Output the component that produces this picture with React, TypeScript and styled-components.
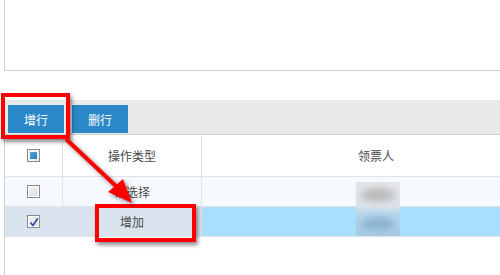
import React from 'react'
import styled, { createGlobalStyle } from 'styled-components'

const GlobalStyle = createGlobalStyle`
	html, body {
		margin: 0;
		padding: 0;
		background: #fff;
		overflow: hidden;
	}
	body {
		font-family: "Noto Sans CJK SC", "Liberation Sans", sans-serif;
		font-size: 12px;
		color: #444;
	}
`

const Page = styled.div`
	position: relative;
	width: 500px;
	height: 275px;
	overflow: hidden;
	padding-left: 4px;
	box-sizing: border-box;
`

const Inner = styled.div`
	width: 560px;
	display: flex;
	flex-direction: column;
`

const TopBox = styled.div`
	height: 70px;
	border-left: 1px solid #cfcfcf;
	border-bottom: 1px solid #cfcfcf;
	margin-bottom: 29px;
`

const Toolbar = styled.div`
	display: flex;
	gap: 8px;
	height: 35px;
	padding: 5px 0 0 4px;
	box-sizing: border-box;
	background: #e9e9e9;
	border-bottom: 1px solid #d2d2d2;
`

const ToolButton = styled.div`
	width: 56px;
	height: 28px;
	display: flex;
	align-items: center;
	justify-content: center;
	background: #2a88c9;
	color: #fff;
	font-size: 12px;
`

const Grid = styled.div`
	display: grid;
	grid-template-columns: 58px 139px 348px;
	border-left: 1px solid #cfcfcf;
	height: 140px;
	align-content: start;
`

const Cell = styled.div<{ $h: number; $bg: string; $last?: boolean }>`
	height: ${p => p.$h}px;
	background: ${p => p.$bg};
	border-bottom: 1px solid #dfe4ea;
	border-right: ${p => (p.$last ? 'none' : '1px solid #dfe4ea')};
	display: flex;
	align-items: center;
	justify-content: center;
	color: #4a4a4a;
	font-size: 12px;
	box-sizing: content-box;
`

const Check = styled.span<{ $kind: 'all' | 'off' | 'on' }>`
	width: 11px;
	height: 11px;
	border: 1px solid #8a8a8a;
	background: ${p => (p.$kind === 'all'
		? 'linear-gradient(135deg, #5fb2e4, #1d6aab)'
		: 'linear-gradient(135deg, #f4f4f4, #dedede)')};
	box-shadow: ${p => (p.$kind === 'all' ? 'inset 0 0 0 2px #eef3f8' : 'inset 0 0 0 1px #fff')};
	display: flex;
	align-items: center;
	justify-content: center;
`

const RedBox = styled.div`
	position: absolute;
	border: 4px solid #ff0000;
	box-shadow: 2px 3px 4px rgba(0, 0, 0, 0.45);
	box-sizing: border-box;
`

const Blur = styled.div`
	position: absolute;
	left: 356px;
	top: 182px;
	width: 44px;
	height: 54px;
	background: linear-gradient(#e4e5e8 0%, #dde3ea 45%, #b7d6ec 58%, #a6cbe4 100%);
`

const Blob = styled.div<{ $c: string }>`
	position: absolute;
	left: 5px;
	width: 34px;
	height: 14px;
	border-radius: 50%;
	background: ${p => p.$c};
	filter: blur(3px);
`

const ArrowLayer = styled.svg`
	position: absolute;
	left: 0;
	top: 0;
	overflow: visible;
	filter: drop-shadow(2px 2px 2px rgba(0, 0, 0, 0.45));
`

const rows = [
	{ kind: 'off' as const, type: '请选择', left: '#f6f9fe', right: '#f6f9fe' },
	{ kind: 'on' as const, type: '增加', left: '#d9e4ef', right: '#aadefd' },
]

const Tick = () => (
	<svg width='10' height='10' viewBox='0 0 10 10'>
		<path d='M1.5 5.5 L4 8.5 L8.8 1.2' fill='none' stroke='#2b4aa6' strokeWidth='1.6' />
	</svg>
)

const App = () => (
	<>
		<GlobalStyle />
		<Page>
			<Inner>
				<TopBox />
				<Toolbar>
					<ToolButton>增行</ToolButton>
					<ToolButton>删行</ToolButton>
				</Toolbar>
				<Grid>
					<Cell $h={41} $bg='#fff'><Check $kind='all' /></Cell>
					<Cell $h={41} $bg='#fff'>操作类型</Cell>
					<Cell $h={41} $bg='#fff' $last>领票人</Cell>
					{rows.map(r => (
						<React.Fragment key={r.type}>
							<Cell $h={29} $bg={r.left}><Check $kind={r.kind}>{r.kind === 'on' && <Tick />}</Check></Cell>
							<Cell $h={29} $bg={r.left}>{r.type}</Cell>
							<Cell $h={29} $bg={r.right} $last />
						</React.Fragment>
					))}
				</Grid>
			</Inner>

			<Blur>
				<Blob $c='#bcbcbc' style={{ top: 6 }} />
				<Blob $c='#8db5d3' style={{ top: 35 }} />
			</Blur>

			<RedBox style={{ left: 1, top: 93, width: 69, height: 46 }} />
			<RedBox style={{ left: 95, top: 204, width: 101, height: 38 }} />

			<ArrowLayer width='500' height='275'>
				<line x1='66' y1='139' x2='118' y2='188' stroke='#ff0000' strokeWidth='4' />
				<polygon points='132,203 108,192 115,186 123,179' fill='#ff0000' />
			</ArrowLayer>
		</Page>
	</>
)

export default App
